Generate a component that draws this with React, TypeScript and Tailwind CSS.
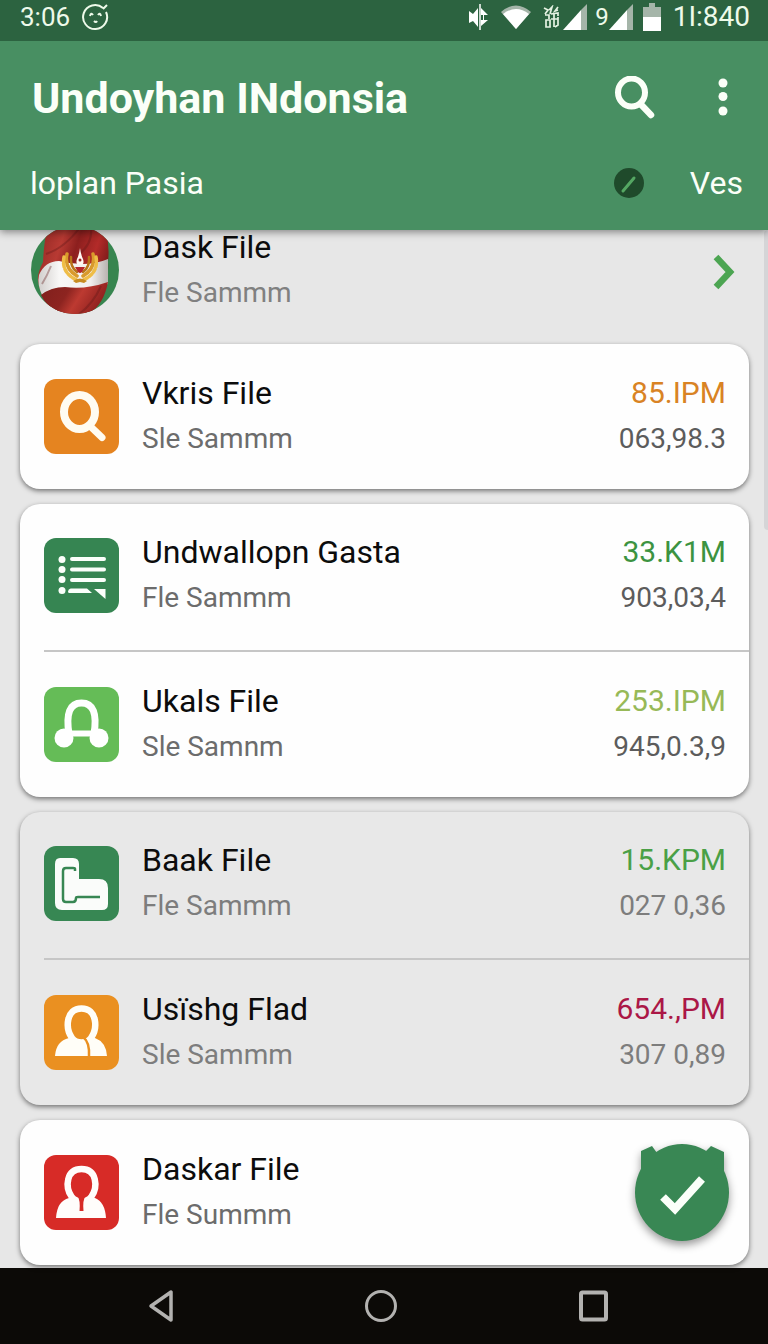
import type { ReactNode } from "react";

function Tile({ className, children }: { className: string; children: ReactNode }) {
  return (
    <span className={`block size-[75px] shrink-0 overflow-hidden rounded-xl ${className}`}>
      <svg viewBox="0 0 75 75" className="size-full" fill="none" aria-hidden="true">
        {children}
      </svg>
    </span>
  );
}

function SearchTile() {
  return (
    <Tile className="bg-[#e58420]">
      <ellipse cx="35.500" cy="33" rx="15.500" ry="17" stroke="#fffcf2" strokeWidth="8" />
      <path d="M46 47L58 58.500" stroke="#fffcf2" strokeWidth="7" strokeLinecap="round" />
    </Tile>
  );
}

function ListTile() {
  return (
    <Tile className="bg-[#368552]">
      <g fill="#fbfffb">
        <circle cx="18" cy="21.500" r="3.500" />
        <circle cx="18" cy="31.500" r="3.500" />
        <circle cx="18" cy="41.500" r="3.500" />
        <circle cx="18" cy="52.500" r="3.500" />
        <path d="M50 51h11.500v10z" />
        <path d="M25 51.500q1-1 2-1h16l5 4.500H25q-2-1 0-3.500z" />
      </g>
      <path d="M28 21h32M28 31.500h32M28 42h32" stroke="#fbfffb" strokeWidth="4" strokeLinecap="round" />
    </Tile>
  );
}

function ArchTile() {
  return (
    <Tile className="bg-[#65bc57]">
      <path d="M25 47Q20 16 37.500 16T50 47" stroke="#fff" strokeWidth="7" />
      <path d="M20 46.500H56" stroke="#fff" strokeWidth="6" />
      <circle cx="20" cy="51" r="9.500" fill="#fff" />
      <circle cx="55" cy="51" r="9.500" fill="#fff" />
    </Tile>
  );
}

function BlockTile() {
  return (
    <Tile className="bg-[#378753]">
      <path
        d="M16 12h13q6 0 6 6v15h20q9 0 9 9v16q0 6-6 6H18q-7 0-7-7V18q0-6 5-6z"
        fill="#fafcfa"
      />
      <path
        d="M31 25v-2q0-1-2-1h-7q-3 0-3 3v28q0 3 3 3h7q3 0 3-4 0-1 2-1h22"
        stroke="#378753"
        strokeWidth="2.500"
      />
    </Tile>
  );
}

function PeopleTile() {
  return (
    <Tile className="bg-[#ea9021]">
      <path d="M11 61q1-15 14-18h26q11 4 12 18z" fill="#fffef8" />
      <path
        d="M37.500 13.500C53 13.500 54 33 47 43 43 49 32 49 28 43 21 33 22 13.500 37.500 13.500z"
        fill="#ea9021"
        stroke="#fffef8"
        strokeWidth="6.500"
      />
      <path d="M30 43q5 4 10 3 5 5 4 15H18q-2-14 12-18z" fill="#fffef8" />
      <path d="M39 42q7 5 6 20" stroke="#ea9021" strokeWidth="2.500" />
    </Tile>
  );
}

function PersonTile() {
  return (
    <Tile className="bg-[#d72b27]">
      <path d="M12 63q1-17 13-20h26q10 4 11 20z" fill="#fffdfb" />
      <path
        d="M37.500 14C53 14 54 32 47.500 41.500 43 48 32 48 27.500 41.500 21 32 22 14 37.500 14z"
        fill="#d72b27"
        stroke="#fffdfb"
        strokeWidth="6.500"
      />
      <path d="M33.500 41q3 4 2 15h4q-1-11 2-15z" fill="#d72b27" />
    </Tile>
  );
}

function Avatar() {
  return (
    <svg viewBox="0 0 88 88" className="size-[88px] shrink-0" aria-hidden="true">
      <defs>
        <clipPath id="disc">
          <circle cx="44" cy="44" r="44" />
        </clipPath>
        <linearGradient id="red" x1="0" y1="0" x2="1" y2="0.400">
          <stop offset="0" stopColor="#8f2622" />
          <stop offset="0.350" stopColor="#b83a33" />
          <stop offset="0.550" stopColor="#8c1f1e" />
          <stop offset="0.800" stopColor="#b32b29" />
          <stop offset="1" stopColor="#7c1a1a" />
        </linearGradient>
        <linearGradient id="white" x1="0" y1="0" x2="1" y2="0">
          <stop offset="0" stopColor="#d2cfcd" />
          <stop offset="0.300" stopColor="#f8f7f6" />
          <stop offset="0.750" stopColor="#f1efee" />
          <stop offset="1" stopColor="#b9b3b0" />
        </linearGradient>
        <linearGradient id="hem" x1="0" y1="0" x2="1" y2="0.300">
          <stop offset="0" stopColor="#7f1f1c" />
          <stop offset="0.450" stopColor="#8d2420" />
          <stop offset="0.650" stopColor="#bd3a31" />
          <stop offset="1" stopColor="#8f211f" />
        </linearGradient>
      </defs>
      <g clipPath="url(#disc)">
        <rect width="88" height="88" fill="#37854f" />
        <path d="M17 0H74Q79 18 77 36 79 66 58 88H30Q10 78 7 54 6 48 12 36 13 14 17 0z" fill="url(#red)" />
        <path d="M8 49Q14 35 28 35 56 42 77 33V58Q60 68 36 63 22 60 11 69 6 58 8 49z" fill="url(#white)" />
        <path d="M10 69Q20 61 34 61 54 64 77 56 73 78 58 88H30Q16 82 10 69z" fill="url(#hem)" />
        <path d="M15 28Q34 22 50 0M60 0Q62 18 48 28M20 40Q16 50 11 58M70 60Q62 78 48 88" fill="none" stroke="#5e1716" strokeOpacity="0.350" strokeWidth="2" />
        <g fill="none" stroke="#d99a2b" strokeWidth="3.500" strokeLinecap="round">
          <path d="M36 28Q33 42 46 50M62 28Q65 42 52 50" />
          <path d="M33 31Q30 47 46 54M65 31Q68 47 52 54" stroke="#efbd47" strokeDasharray="4 2" />
          <path d="M40 31Q39 41 46 46M58 31Q59 41 52 46" stroke="#b87418" strokeWidth="2.500" />
        </g>
        <path d="M42 55q7-5 14 0l-3 2-4-1-4 1z" fill="#c78b22" />
        <path d="M44 41h10l-3 5q-2 2-4 0z" fill="#b5272a" />
        <path d="M49 22q1 7 3 11 2 6-3 6t-3-6q2-4 3-11z" fill="#fff8f3" />
        <circle cx="49" cy="34" r="1.500" fill="#9c2322" />
      </g>
    </svg>
  );
}

type Item = {
  name: string;
  note: string;
  icon: ReactNode;
  value?: string;
  valueClass?: string;
  detail?: string;
  detailClass?: string;
};

type Group = { id: string; cardClass: string; noteClass: string; items: Item[] };

const groups: Group[] = [
  {
    id: "a",
    cardClass: "bg-[#fefefe]",
    noteClass: "text-[#6c6c6c]",
    items: [
      { name: "Vkris File", note: "Sle Sammm", icon: <SearchTile />, value: "85.IPM", valueClass: "text-[#d98324]", detail: "063,98.3", detailClass: "text-[#5c5c5c]" },
    ],
  },
  {
    id: "b",
    cardClass: "bg-[#fefefe]",
    noteClass: "text-[#6c6c6c]",
    items: [
      { name: "Undwallopn Gasta", note: "Fle Sammm", icon: <ListTile />, value: "33.K1M", valueClass: "text-[#3c9341]", detail: "903,03,4", detailClass: "text-[#5c5c5c]" },
      { name: "Ukals File", note: "Sle Samnm", icon: <ArchTile />, value: "253.IPM", valueClass: "text-[#97b957]", detail: "945,0.3,9", detailClass: "text-[#5c5c5c]" },
    ],
  },
  {
    id: "c",
    cardClass: "bg-[#e8e8e8]",
    noteClass: "text-[#7d7d7d]",
    items: [
      { name: "Baak File", note: "Fle Sammm", icon: <BlockTile />, value: "15.KPM", valueClass: "text-[#4aa046]", detail: "027 0,36", detailClass: "text-[#7d7d7d]" },
      { name: "Usïshg Flad", note: "Sle Sammm", icon: <PeopleTile />, value: "654.,PM", valueClass: "text-[#ab1746]", detail: "307 0,89", detailClass: "text-[#7d7d7d]" },
    ],
  },
  {
    id: "d",
    cardClass: "bg-[#fefefe]",
    noteClass: "text-[#6c6c6c]",
    items: [{ name: "Daskar File", note: "Fle Summm", icon: <PersonTile /> }],
  },
];

function Row({ item, noteClass, divided }: { item: Item; noteClass: string; divided: boolean }) {
  return (
    <li className={`flex items-center pr-[23px] ${divided ? "border-b-2 border-[#c6c6c6] pt-[25px] pb-[29px]" : "pt-[26px] pb-[27px]"}`}>
      {item.icon}
      <div className="ml-[23px] min-w-0 flex-1">
        <h2 className="text-[32px] leading-[46px] text-[#0c0c0c]">{item.name}</h2>
        <p className={`text-[28px] leading-[46px] ${noteClass}`}>{item.note}</p>
      </div>
      {item.value && (
        <div className="text-right">
          <p className={`text-[30px] leading-[46px] ${item.valueClass}`}>{item.value}</p>
          <p className={`text-[28px] leading-[46px] ${item.detailClass}`}>{item.detail}</p>
        </div>
      )}
    </li>
  );
}

function Signal() {
  return (
    <svg viewBox="0 0 24 26" className="h-[26px] w-6" aria-hidden="true">
      <path d="M24 0V26H18V6z" fill="#a5b5a9" />
      <path d="M18 6V26H0z" fill="#fff" />
    </svg>
  );
}

function StatusBar() {
  return (
    <div className="flex h-[41px] items-center bg-[#2c6340] pr-[18px] pb-[7px] pl-5 text-[#eefaea]">
      <span className="text-[26px] leading-8">3:06</span>
      <svg viewBox="0 0 28 28" className="ml-3 size-7" fill="none" stroke="currentColor" strokeWidth="2" aria-hidden="true">
        <path d="M21 5A12 12 0 1 0 24 9M21 6l4-4" />
        <path d="M8 13q1-4 3-1M16 12q2-3 3 1" />
        <path d="M12 18q2 2 3 0" />
      </svg>
      <div className="ml-auto flex items-center">
        <svg viewBox="0 0 20 28" className="h-7 w-5" aria-hidden="true">
          <path d="M0 8l4 3 5-6v19l-5-6-4 2z" fill="#fff" />
          <path d="M11 1v26" stroke="#fff" strokeWidth="1.500" />
          <path d="M12 5l7 7h-4v5h4l-7 6V17h2v-5h-2z" fill="#fff" />
        </svg>
        <svg viewBox="0 0 30 24" className="ml-3 h-6 w-[30px]" aria-hidden="true">
          <path d="M0 7Q15-6 30 7L15 24z" fill="#a5b5a9" />
          <path d="M2 9Q15-1 28 9L15 24z" fill="#fff" />
        </svg>
        <svg viewBox="0 0 16 24" className="ml-3 h-6 w-4" fill="none" stroke="#e5f2e2" strokeWidth="1.700" aria-hidden="true">
          <path d="M1 3l4 2-3 4M6 5l3-3-2 7M15 2l-3 4 3-1M2 10h4v4M3 15h4v7H3zM8 9l7-1v3M11 8v14M15 12v8l-3 2M8 14h7" />
        </svg>
        <span className="ml-1">
          <Signal />
        </span>
        <span className="ml-2 text-2xl leading-8">9</span>
        <span>
          <Signal />
        </span>
        <svg viewBox="0 0 18 28" className="mr-3 ml-[10px] h-7 w-[18px]" aria-hidden="true">
          <path d="M6 0h6v4h6v10H0V4h6z" fill="#a5b5a9" />
          <path d="M0 14h18v14H0z" fill="#fff" />
        </svg>
        <span className="text-[28px] leading-8">1I:840</span>
      </div>
    </div>
  );
}

export default function App() {
  return (
    <div className="flex min-h-screen flex-col bg-[#e7e7e7] font-['Roboto',sans-serif]">
      <header className="relative z-10 shadow-[0_2px_8px_rgba(0,0,0,0.45)]">
        <StatusBar />
        <div className="bg-[#488f62] pb-5 text-[#fbfff8]">
          <div className="flex h-[114px] items-center pr-[25px] pl-8">
            <h1 className="flex-1 text-[43px] leading-[52px] font-bold">Undoyhan INdonsia</h1>
            <button type="button" aria-label="Search" className="flex size-12 items-center justify-center">
              <svg viewBox="0 0 40 44" className="h-11 w-10" fill="none" stroke="currentColor" aria-hidden="true">
                <ellipse cx="16.500" cy="16.500" rx="13.500" ry="14" strokeWidth="6" />
                <path d="M26 28.500L36 39" strokeWidth="6.500" strokeLinecap="round" />
              </svg>
            </button>
            <button type="button" aria-label="More options" className="ml-11 flex h-12 w-10 items-center justify-center">
              <svg viewBox="0 0 10 40" className="h-10 w-[10px]" fill="currentColor" aria-hidden="true">
                <circle cx="5" cy="5" r="4.500" />
                <circle cx="5" cy="18.500" r="4.500" />
                <circle cx="5" cy="33" r="4.500" />
              </svg>
            </button>
          </div>
          <div className="flex h-[55px] items-center pr-[25px] pl-[30px] text-[32px] leading-10">
            <p className="flex-1">loplan Pasia</p>
            <svg viewBox="0 0 30 30" className="size-[30px]" aria-hidden="true">
              <circle cx="15" cy="15" r="15" fill="#1f4a2b" />
              <path d="M9 23L20 10" stroke="#55a763" strokeWidth="3" strokeLinecap="round" />
            </svg>
            <button type="button" className="ml-[46px]">Ves</button>
          </div>
        </div>
      </header>

      <main className="relative flex-1">
        <a href="#dask" className="-mt-[6px] mb-7 flex items-center pr-[33px] pl-[31px]">
          <Avatar />
          <div className="ml-[23px] flex-1">
            <h2 className="text-[32px] leading-[46px] text-[#0c0c0c]">Dask File</h2>
            <p className="text-[28px] leading-[46px] text-[#808080]">Fle Sammm</p>
          </div>
          <svg viewBox="0 0 22 36" className="mt-1 h-9 w-[22px]" fill="none" stroke="#4ca552" strokeWidth="6.500" aria-hidden="true">
            <path d="M3 3L17 18 3 33" />
          </svg>
        </a>

        <div className="flex flex-col gap-[15px] pr-[19px] pb-[3px] pl-5">
          {groups.map((group) => (
            <section
              key={group.id}
              className={`relative rounded-[20px] pl-6 shadow-[0_2px_5px_rgba(0,0,0,0.5)] ${group.cardClass}`}
            >
              <ul>
                {group.items.map((item, i) => (
                  <Row key={item.name} item={item} noteClass={group.noteClass} divided={i < group.items.length - 1} />
                ))}
              </ul>
              {group.id === "d" && (
                <button type="button" aria-label="Confirm" className="absolute top-[23px] right-5 drop-shadow-[0_4px_4px_rgba(0,0,0,0.4)]">
                  <svg viewBox="0 0 94 98" className="h-[98px] w-[94px]" aria-hidden="true">
                    <ellipse cx="47" cy="49.500" rx="47" ry="48.500" fill="#398754" />
                    <path d="M6 34V8L17 3l5 7zM89 34V9L76 3l-6 6z" fill="#398754" />
                    <path d="M28 54l12 12L67 36" fill="none" stroke="#fbfff9" strokeWidth="8" />
                  </svg>
                </button>
              )}
            </section>
          ))}
        </div>
        <span className="absolute top-0 right-0 h-[300px] w-1 rounded-l bg-[#d5d5d7]" />
      </main>

      <nav aria-label="System" className="flex h-[76px] items-center bg-[#0c0a07] pl-[139px] text-[#b3b2b0]">
        <button type="button" aria-label="Back" className="mr-44 flex size-11 items-center justify-center">
          <svg viewBox="0 0 26 34" className="h-[34px] w-[26px]" fill="none" stroke="currentColor" strokeWidth="3.500" strokeLinejoin="round" aria-hidden="true">
            <path d="M23 3V31L3 17z" />
          </svg>
        </button>
        <button type="button" aria-label="Home" className="mr-42 flex size-11 items-center justify-center">
          <svg viewBox="0 0 34 34" className="size-[34px]" fill="none" stroke="currentColor" strokeWidth="3" aria-hidden="true">
            <circle cx="17" cy="17" r="14.500" />
          </svg>
        </button>
        <button type="button" aria-label="Recent apps" className="flex size-11 items-center justify-center">
          <svg viewBox="0 0 30 32" className="h-8 w-[30px]" fill="none" stroke="currentColor" strokeWidth="4" aria-hidden="true">
            <rect x="3" y="2.500" width="25" height="27" rx="1.500" />
          </svg>
        </button>
      </nav>
    </div>
  );
}
